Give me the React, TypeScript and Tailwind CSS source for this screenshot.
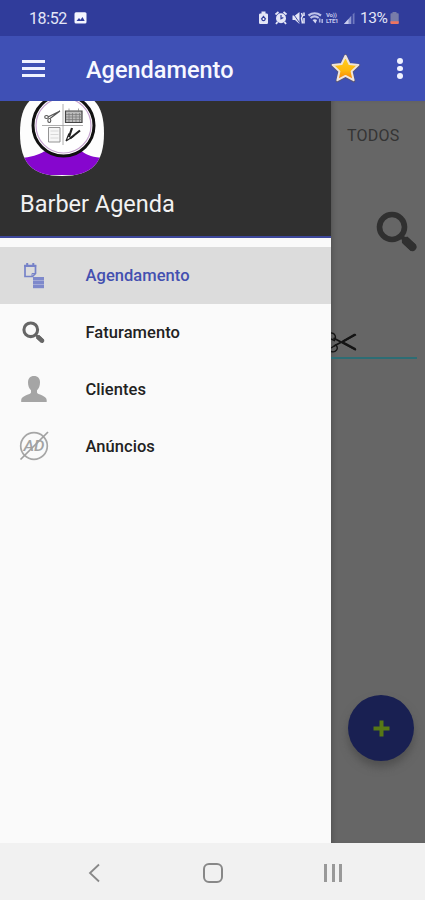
import React from 'react';

type MenuEntry = {
    label: string;
    icon: React.ReactNode;
    active?: boolean;
};

function StatusBar() {
    return (
        <div className="flex h-9 shrink-0 items-center bg-[#303c9b] pl-[29px] pr-[26px] text-[#e4e6f7]">
            <span className="w-[40px] pt-[1px] text-[16px] leading-none tracking-[-0.4px]">18:52</span>
            <svg className="ml-[5px]" width="13" height="12" viewBox="0 0 13 12">
                <rect x="0.5" y="0.2" width="12" height="11.2" rx="1.5" fill="#f4f5ff"/>
                <path d="M2.5 9 5 6l1.5 1.7L8.5 5l2.2 4Z" fill="#303c9b"/>
            </svg>
            <svg className="ml-auto" width="98" height="16" viewBox="0 0 98 16" fill="#e4e6f7">
                {/* battery saver */}
                <path d="M3.5 1.5h4v2H9a1.2 1.2 0 0 1 1 1.2v8.1A1.2 1.2 0 0 1 8.8 14H2.2A1.2 1.2 0 0 1 1 12.8V4.7a1.2 1.2 0 0 1 1-1.2h1.5Z"/>
                <path d="M5.5 5.5 7.7 8.3a2.3 2.3 0 1 1-4.4 0Z" fill="#303c9b"/>
                <circle cx="5.5" cy="9" r="1" fill="#fff"/>
                {/* alarm */}
                <circle cx="23" cy="8.3" r="5"/>
                <path d="M17.5 4.5 20.5 2M28.5 4.5l-3-2.5M19.5 12l-1.5 2M26.5 12l1.5 2" stroke="#e4e6f7" strokeWidth="1.8"/>
                <path d="M23 5v3.700l2.300-1.300" fill="none" stroke="#303c9b" strokeWidth="1.2"/>
                {/* muted speaker */}
                <path d="M34.500 5.500h2.500L41.500 2v12L37 10h-2.500Z"/>
                <path d="M34 2 42 13.500" stroke="#303c9b" strokeWidth="0.9"/>
                <path d="M43.500 3l1 3-1 2 1 5.500M46 2.500v3.500M46 8v5.500" fill="none" stroke="#e4e6f7" strokeWidth="1.500"/>
                {/* wifi */}
                <path d="M50.500 5.500Q56.500 1 63 5.500M52.500 8q4-3.200 8.200 0" fill="none" stroke="#bfc4ea" strokeWidth="2.2"/>
                <path d="M54.500 10q2.200-1.600 4.500 0l-1.500 3.500Z" fill="#d5d8f3"/>
                <path d="M61.700 8.500v4M64.200 9v4" stroke="#a8afe0" strokeWidth="1.600"/>
                {/* signal */}
                <path d="M96.500 2.500V14H94.700V4.500Z" fill="#6f79be"/>
                <path d="M93.300 5.800V14h-7.300Z" fill="#8e97d1"/>
                <path d="M90.500 9V14H86Z" fill="#c9cdee"/>
            </svg>
            <span className="-ml-[30px] flex w-[17px] flex-col items-start text-[6px] font-bold leading-[6px] tracking-[-0.2px] text-[#c5c9ed]">
                <span>Vo))</span>
                <span>LTE1</span>
            </span>
            <span className="ml-[17px] w-[29px] whitespace-nowrap pt-[1px] text-[15.5px] leading-none tracking-[-0.5px]">13%</span>
            <svg className="ml-[1px]" width="9" height="14" viewBox="0 0 9 14">
                <path d="M2.5 1h4v1.2H8a.7.7 0 0 1 .7.7V12a1 1 0 0 1-1 1H1.5a1 1 0 0 1-1-1V2.9a.7.7 0 0 1 .7-.7h1.3Z" fill="#777ca9"/>
                <path d="M.5 10.3h8.2V12a1 1 0 0 1-1 1H1.5a1 1 0 0 1-1-1Z" fill="#ef7460"/>
            </svg>
        </div>
    );
}

function Toolbar() {
    return (
        <header className="flex h-[65px] shrink-0 items-center bg-[#3f50b5] px-[22px]">
            <div className="flex w-[23px] flex-col gap-[4.5px]">
                <span className="h-[2.5px] bg-[#f0f2ff]"/>
                <span className="h-[2.5px] bg-[#f0f2ff]"/>
                <span className="h-[2.5px] bg-[#f0f2ff]"/>
            </div>
            <h1 className="ml-[41px] pt-[4px] text-[23.5px] font-medium leading-none text-[#f7f8ff]">Agendamento</h1>
            <svg className="ml-auto" width="31" height="31" viewBox="0 0 31 31">
                <defs>
                    <linearGradient id="star" x1="0" y1="0" x2="0" y2="1">
                        <stop offset="0" stopColor="#ffd21f"/>
                        <stop offset="0.6" stopColor="#ffb80e"/>
                        <stop offset="1" stopColor="#f77d0a"/>
                    </linearGradient>
                </defs>
                <path d="m15.500 2.500 4 8.700 9.400 1-7.200 6.500 2.200 9.400-8.400-4.700-8.400 4.700 2.200-9.400-7.200-6.500 9.400-1Z" fill="#5a5674" stroke="#5a5674" strokeWidth="2.800" strokeLinejoin="round"/>
                <path d="m15.500 2.800 3.900 8.200 9 .9-6.800 6.500 2 8.800-8.100-4.300-8.100 4.300 2-8.800-6.800-6.500 9-.9Z" fill="url(#star)" stroke="#eee4de" strokeWidth="2" strokeLinejoin="round"/>
            </svg>
            <div className="ml-[36px] flex w-[6px] flex-col gap-[2px]">
                <span className="size-[5.5px] rounded-full bg-[#f0f2ff]"/>
                <span className="size-[5.5px] rounded-full bg-[#f0f2ff]"/>
                <span className="size-[5.5px] rounded-full bg-[#f0f2ff]"/>
            </div>
        </header>
    );
}

function Avatar() {
    return (
        <svg width="86" height="76" viewBox="19 101 86 76">
            <defs>
                <clipPath id="squircle">
                    <path d="M62 91C92 91 104 103 104 133S92 176 62 176 20 163 20 133 32 91 62 91Z"/>
                </clipPath>
            </defs>
            <g clipPath="url(#squircle)">
                <rect x="19" y="90" width="86" height="87" fill="#fdfdfd"/>
                <path d="M19 158.5c11-1.5 20-3.5 25-7h38c5 4 12 6 23 6.5V175H19Z" fill="#8606ce"/>
                <circle cx="63.5" cy="125.5" r="30.5" fill="#fff" stroke="#111" strokeWidth="3"/>
                <circle cx="63.5" cy="125.5" r="27.5" fill="none" stroke="#c5a3cf" strokeWidth="1.2"/>
            </g>
            <path d="M63 104v41M42 125.5h41" stroke="#999" strokeWidth="0.8"/>
            {/* scissors */}
            <g fill="none" stroke="#555" strokeWidth="1.1">
                <ellipse cx="46.5" cy="117" rx="1.8" ry="1.5"/>
                <ellipse cx="49.3" cy="120.5" rx="1.5" ry="2"/>
                <path d="m48 117 12-6M50 118.5l10-7.5"/>
            </g>
            {/* calendar */}
            <path d="M65.5 111h16.500v11.500H65.500Z" fill="#bbb" stroke="#444" strokeWidth="1.2"/>
            <path d="M69 108.5v3.500M78.500 108.500v3.500M66 114.500h16M66 117h16M66 119.500h16M69 113v9M72.500 113v9M76 113v9M79.500 113v9" stroke="#777" strokeWidth="0.7"/>
            {/* notes */}
            <path d="M48.500 127.500H60v14.500H48.500Z" fill="#f6f6f6" stroke="#888" strokeWidth="0.9"/>
            <path d="M50.500 131h8M50.500 134.500h8M50.500 138h8" stroke="#ccc" strokeWidth="0.7"/>
            {/* razor */}
            <path d="m72 128-3 9M80 130.500 70 138.500" stroke="#222" strokeWidth="2.2"/>
            <path d="m66 141 3-7.500M66 141l8-5" stroke="#222" strokeWidth="1.2"/>
        </svg>
    );
}

function AgendaIcon() {
    return (
        <svg width="28" height="28" viewBox="0 0 28 28" fill="none" stroke="#7682c8">
            <path d="M5 4.500h10.500v8L12.500 15.500H5Z" strokeWidth="1.7"/>
            <path d="M4.200 5h12M7.200 2v3M13.300 2v3" strokeWidth="2"/>
            <path d="M15 12.500h-3V15" strokeWidth="1"/>
            <rect x="13" y="16" width="11" height="11.2" fill="#7e89cb" stroke="none"/>
            <path d="M13 19.500h11M13 23.500h11" stroke="#a9afd8" strokeWidth="0.9"/>
        </svg>
    );
}

function SearchIcon({size, color}: { size: number; color: string }) {
    return (
        <svg width={size} height={size} viewBox="0 0 42 42" fill="none" stroke={color}>
            <circle cx="16" cy="16" r="12.5" strokeWidth="5.6"/>
            <path d="m24.5 24.5 4 4" strokeWidth="4.5"/>
            <path d="m28.500 28.500 9 8.500" strokeWidth="8"/>
            <path d="m30 30 6.500 6" strokeWidth="8" strokeLinecap="round"/>
        </svg>
    );
}

function PersonIcon() {
    return (
        <svg width="28" height="28" viewBox="0 0 28 28" fill="#a5a5a5">
            <path d="M14 1c4 0 6 2.6 6 6.5 0 3.2-1.1 6-3 7.8v2.2c0 2.2 9.7 2.800 9.700 7.500v2H1.200v-2c0-4.700 9.800-5.300 9.800-7.500v-2.200C9.100 13.500 8 10.700 8 7.500 8 3.600 10 1 14 1Z"/>
        </svg>
    );
}

function NoAdsIcon() {
    return (
        <svg width="30" height="30" viewBox="0 0 30 30">
            <circle cx="15" cy="15" r="13.3" fill="none" stroke="#a6a6a6" strokeWidth="1.7"/>
            <text x="4.5" y="20" fontSize="14.5" fontWeight="500" fontStyle="italic" fill="#a3a3a3" textLength="21" lengthAdjust="spacingAndGlyphs">AD</text>
            <path d="M1.5 28.5 29 1" stroke="#a0a0a0" strokeWidth="1.7"/>
        </svg>
    );
}

const menu: MenuEntry[] = [
    {label: 'Agendamento', icon: <AgendaIcon/>, active: true},
    {label: 'Faturamento', icon: <SearchIcon size={23} color="#666"/>},
    {label: 'Clientes', icon: <PersonIcon/>},
    {label: 'Anúncios', icon: <NoAdsIcon/>},
];

function Drawer() {
    return (
        <aside className="flex w-[331px] shrink-0 flex-col bg-[#fafafa]">
            <div className="flex h-[137px] flex-col border-b-2 border-[#3d479b] bg-[#303030] pl-[19px]">
                <Avatar/>
                <p className="ml-[1px] mt-[14px] text-[23.5px] leading-[26px] text-[#f2f2f2]">Barber Agenda</p>
            </div>
            <nav className="pt-[9px]">
                {menu.map((entry) => (
                    <div
                        key={entry.label}
                        className={`flex h-[57px] items-center pb-[1px] pl-[18px] ${entry.active ? 'bg-[#dcdcdc] text-[#4350b0]' : 'text-[#222]'}`}
                    >
                        <span className="flex w-[31px] justify-center">{entry.icon}</span>
                        <span className="ml-[36.5px] pt-[3px] text-[16.5px] font-medium leading-none tracking-[0.05px]">{entry.label}</span>
                    </div>
                ))}
            </nav>
        </aside>
    );
}

function Backdrop() {
    return (
        <main className="flex min-w-0 flex-1 flex-col bg-[#666] shadow-[inset_4px_0_4px_-2px_#555]">
            <p className="ml-[16px] mt-[25px] text-[16px] leading-[20px] tracking-[0.2px] text-[#343434]">TODOS</p>
            <div className="mr-[7px] mt-[65px] self-end">
                <SearchIcon size={42} color="#303030"/>
            </div>
            <div className="mr-[8px] mt-[78px] h-[28px] border-b-2 border-[#2d6d74]">
                <svg width="27" height="26" viewBox="0 0 27 26" fill="none" stroke="#141414">
                    <path d="M0 2c4-.5 5.500 4 3.500 7.500L0 8M0 20.500c5 1.500 8-3 5-6.500L0 17" strokeWidth="1.4"/>
                    <path d="M2.500 7 25 19M3 15 25 3.500" strokeWidth="1.8"/>
                    <path d="m12 11.500 12.500 6.700M12 10.500l12-7" strokeWidth="2.2"/>
                </svg>
            </div>
            <div className="mb-[82px] mr-[11px] mt-auto flex size-[66px] items-center justify-center self-end rounded-full bg-[#192052] shadow-[0_6px_9px_#505050]">
                <svg width="17" height="17" viewBox="0 0 17 17">
                    <path d="M8.5.5v16M.5 8.5h16" stroke="#577815" strokeWidth="4"/>
                </svg>
            </div>
        </main>
    );
}

function NavigationBar() {
    return (
        <footer className="flex h-[57px] shrink-0 items-center justify-between bg-[#f1f1f1] pb-[1px] pl-[88px] pr-[83px] pt-[4px]">
            <svg width="12" height="20" viewBox="0 0 12 20" fill="none" stroke="#888" strokeWidth="1.8">
                <path d="m11 1.5-9 8.5 9 8.5"/>
            </svg>
            <span className="ml-[1px] size-[20px] rounded-[6px] border-2 border-[#888]"/>
            <div className="flex h-[18px] w-[18px] justify-between">
                <span className="w-[3px] bg-[#999]"/>
                <span className="w-[3px] bg-[#999]"/>
                <span className="w-[3px] bg-[#999]"/>
            </div>
        </footer>
    );
}

export default function App() {
    return (
        <div className="flex h-[900px] w-[425px] flex-col overflow-hidden font-['Roboto',sans-serif]">
            <StatusBar/>
            <Toolbar/>
            <div className="flex min-h-0 flex-1">
                <Drawer/>
                <Backdrop/>
            </div>
            <NavigationBar/>
        </div>
    );
}
